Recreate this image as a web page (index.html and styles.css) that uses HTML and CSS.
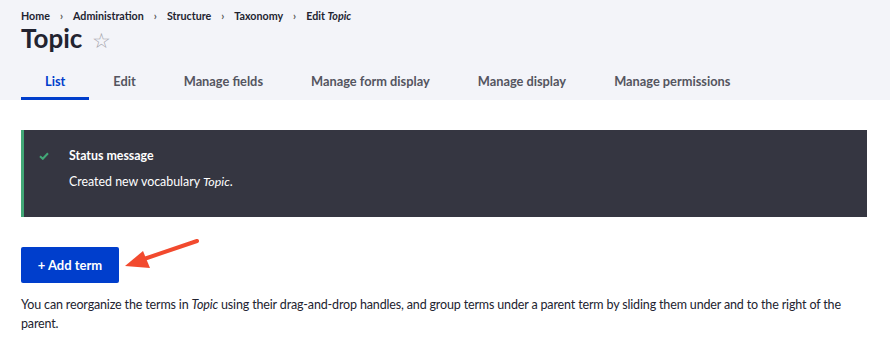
FILE: index.html
```html
<!DOCTYPE html>
<html lang="en">
<head>
    <meta charset="UTF-8">
    <meta name="viewport" content="width=device-width, initial-scale=1.0">
    <title>Topic | Taxonomy</title>
    <link rel="stylesheet" href="styles.css">
</head>
<body>

    <header class="page-header">
        <ol class="breadcrumb">
            <li><a href="#">Home</a></li>
            <li><a href="#">Administration</a></li>
            <li><a href="#">Structure</a></li>
            <li><a href="#">Taxonomy</a></li>
            <li><a href="#">Edit <em>Topic</em></a></li>
        </ol>
        <h1 class="page-title">Topic <span class="star">&#9734;</span></h1>
        <ul class="tabs">
            <li><a href="#" class="active">List</a></li>
            <li><a href="#">Edit</a></li>
            <li><a href="#">Manage fields</a></li>
            <li><a href="#">Manage form display</a></li>
            <li><a href="#">Manage display</a></li>
            <li><a href="#">Manage permissions</a></li>
        </ul>
    </header>

    <main class="content">
        <div class="status">
            <svg class="status-icon" width="10" height="8" viewBox="0 0 10 8">
                <path d="M1 4.2 L3.8 6.8 L9 1.2" fill="none" stroke="#42a877" stroke-width="2"/>
            </svg>
            <div>
                <h2 class="status-title">Status message</h2>
                <p class="status-text">Created new vocabulary <em>Topic</em>.</p>
            </div>
        </div>

        <div class="actions">
            <a href="#" class="add-btn">+ Add term</a>
            <!-- annotation arrow pointing at the button -->
            <svg class="pointer" width="85" height="42" viewBox="0 0 85 42">
                <line x1="20" y1="25" x2="76" y2="6" stroke="#f24a2e" stroke-width="4" stroke-linecap="round"/>
                <polygon points="4,31 22,16 29,33" fill="#f24a2e"/>
            </svg>
        </div>

        <p class="help">You can reorganize the terms in <em>Topic</em> using their drag-and-drop handles, and group terms under a parent term by sliding them under and to the right of the parent.</p>
    </main>

</body>
</html>
```

FILE: styles.css
```css
* {
    margin: 0;
    padding: 0;
    box-sizing: border-box;
}

body {
    font-family: Lato, "Open Sans", sans-serif;
    color: #222330;
    background: white;
}

a {
    text-decoration: none;
    color: inherit;
}

.page-header {
    background: #f3f4f9;
    padding: 9px 21px 0;
}

.breadcrumb {
    display: flex;
    list-style: none;
    font-size: 10.7px;
    font-weight: bold;
    line-height: 14px;
}

.breadcrumb li + li::before {
    content: "\203A";
    padding: 0 10px;
    color: #555;
}

.page-title {
    height: 32px;
    font-size: 26px;
    line-height: 32px;
    font-weight: bold;
    color: #222330;
    margin-top: -1px;
}

.star {
    font-weight: normal;
    font-size: 21px;
    line-height: 1;
    color: #a3a3ab;
    margin-left: 3px;
}

.tabs {
    display: flex;
    list-style: none;
    margin-top: 12px;
}

.tabs a {
    display: block;
    padding: 0 24px;
    height: 34px;
    line-height: 30px;
    font-size: 12.8px;
    font-weight: bold;
    color: #545560;
    border-bottom: 3px solid transparent;
}

.tabs a.active {
    color: #003ecc;
    border-bottom-color: #003ecc;
}

.content {
    padding: 30px 23px 20px 21px;
}

.status {
    display: flex;
    align-items: flex-start;
    gap: 20px;
    height: 87px;
    padding: 17px 0 0 15px;
    background: #353641;
    border-left: 3px solid #42a877;
    color: white;
}

.status-icon {
    margin-top: 5px;
}

.status-title {
    font-size: 12.4px;
    font-weight: bold;
    line-height: 17px;
}

.status-text {
    font-size: 12.4px;
    line-height: 18px;
    margin-top: 9px;
}

.actions {
    position: relative;
    margin-top: 30px;
}

.add-btn {
    display: inline-block;
    width: 98px;
    height: 36px;
    line-height: 36px;
    text-align: center;
    background: #003ecc;
    color: white;
    font-size: 13px;
    font-weight: bold;
    border-radius: 2px;
}

.pointer {
    position: absolute;
    left: 100px;
    top: -12px;
}

.help {
    font-size: 12.5px;
    letter-spacing: -0.15px;
    line-height: 19px;
    margin-top: 12px;
}
```
